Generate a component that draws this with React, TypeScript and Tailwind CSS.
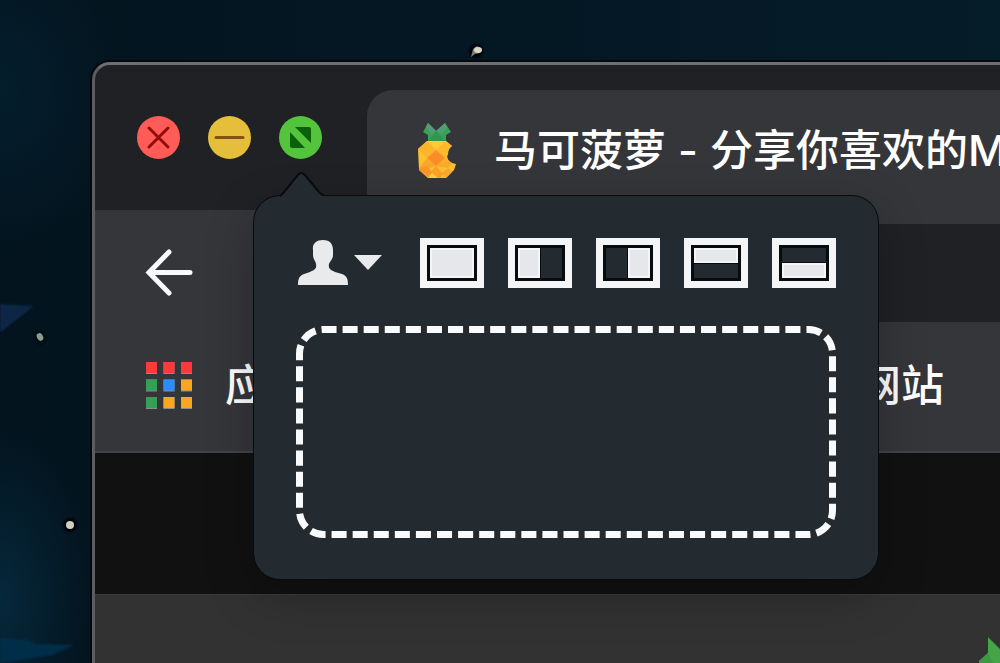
import React, { useState } from "react";

const layouts = [
  { name: "Full screen", x: 10, y: 10, w: 44, h: 30 },
  { name: "Left half", x: 10, y: 10, w: 22, h: 30 },
  { name: "Right half", x: 32, y: 10, w: 22, h: 30 },
  { name: "Top half", x: 10, y: 10, w: 44, h: 15 },
  { name: "Bottom half", x: 10, y: 25, w: 44, h: 15 },
];

const appColors = [
  "#fb3b3b",
  "#fb3b3b",
  "#fb3b3b",
  "#34a056",
  "#2c8cfb",
  "#fba61f",
  "#34a056",
  "#fba61f",
  "#fba61f",
];

const Wallpaper = () => (
  <svg className="absolute inset-0 h-full w-full" aria-hidden="true">
    <defs>
      <filter id="soft" x="-30%" y="-30%" width="160%" height="160%">
        <feGaussianBlur stdDeviation="1" />
      </filter>
      <radialGradient id="glow">
        <stop offset="0" stopColor="#06283c" />
        <stop offset="1" stopColor="#06283c" stopOpacity="0" />
      </radialGradient>
    </defs>
    <ellipse cx="0" cy="600" rx="90" ry="170" fill="url(#glow)" />
    <ellipse cx="0" cy="90" rx="120" ry="160" fill="url(#glow)" opacity="0.5" />
    <g filter="url(#soft)">
      <path d="M0 304 L34 306 L0 333Z" fill="#082545" />
      <path d="M0 638 L28 640 L36 644 L74 645 L52 655 L0 663Z" fill="#062d4a" />
      <circle cx="476" cy="51" r="7" fill="#01060a" />
      <circle cx="40" cy="338" r="6" fill="#020a0e" />
      <circle cx="70" cy="525" r="7" fill="#010508" />
    </g>
    <path d="M471 57 L473 49 L477 46 L482 49 L480 53 L475 54Z" fill="#7b7b6f" />
    <ellipse cx="478" cy="50" rx="4" ry="3" fill="#d8d8c4" />
    <ellipse cx="40" cy="337" rx="3" ry="4" fill="#8b9d8e" transform="rotate(-30 40 337)" />
    <ellipse cx="70" cy="525" rx="4" ry="4" fill="#cfcfbb" />
  </svg>
);

const Pineapple = () => (
  <svg className="h-[56px] w-[38px] shrink-0" viewBox="0 0 38 56" aria-hidden="true">
    <path d="M10 1 L18 9 L27 1 L33 10 L28 13 V19 H10 V13 L5 10Z" fill="#35a456" />
    <path d="M10 1 L18 9 L13 12 L8 5Z" fill="#559b78" />
    <path d="M27 1 L18 9 L24 12 L29 5Z" fill="#559b78" />
    <path d="M18 9 L28 19 H10Z" fill="#2f9850" />
    <path
      d="M9 19 H28 L34 24 C28 28 27 38 34 41 L38 42 L36 48 L28 56 H10 L1 48 L0 27Z"
      fill="#fdc02f"
    />
    <path d="M9 19 H28 L18 28Z" fill="#fecb38" />
    <path d="M9 19 L18 28 L9 36 L0 27Z" fill="#fcb42b" />
    <path d="M28 19 L34 24 C31 26 30 29 30 33 L26 36 L18 28Z" fill="#fdb82c" />
    <path d="M18 28 L27 36 L18 44 L9 36Z" fill="#fb8d29" />
    <path d="M9 36 L18 44 L9 47 L1 46Z" fill="#fca62a" />
    <path d="M27 36 L34 41 L30 46 L18 44Z" fill="#fcab2b" />
    <path d="M1 46 L9 44 L14 50 L10 56 L1 48Z" fill="#fb9829" />
    <path d="M18 44 L25 52 L22 56 H14 L11 52Z" fill="#fca02a" />
    <path d="M30 46 L34 50 L28 56 L24 51Z" fill="#fca82b" />
    <path d="M10 56 L14 51 L20 56Z" fill="#fed13e" />
  </svg>
);

const TrafficLights = () => (
  <div className="flex shrink-0 gap-[28px]">
    <button aria-label="Close" className="h-[43px] w-[43px] rounded-full bg-[#ff5b57]">
      <svg viewBox="0 0 43 43">
        <path d="M12 12 L31 31 M31 12 L12 31" stroke="#920c0c" strokeWidth="3" strokeLinecap="round" />
      </svg>
    </button>
    <button aria-label="Minimize" className="h-[43px] w-[43px] rounded-full bg-[#e5bf3c]">
      <svg viewBox="0 0 43 43">
        <path d="M8 21.5 H35" stroke="#865012" strokeWidth="3" strokeLinecap="round" />
      </svg>
    </button>
    <button aria-label="Zoom" className="h-[43px] w-[43px] rounded-full bg-[#54c43c]">
      <svg viewBox="0 0 43 43" fill="#0b600c">
        <path d="M16 11 H30 Q32 11 32 13 V27Z" />
        <path d="M11 16 L26 32 H13 Q11 32 11 30Z" />
      </svg>
    </button>
  </div>
);

const LayoutPopover = () => {
  const [active, setActive] = useState("");

  return (
    <div
      role="dialog"
      aria-label="Window layouts"
      className="absolute left-[159px] top-[131px] flex flex-col gap-[38px] rounded-[26px] bg-[#232a30] px-[42px] pb-[41px] pt-[42px] shadow-[0_0_0_1px_#070b0e,0_16px_48px_rgba(0,0,0,0.25)]"
    >
      <svg className="absolute -top-[25px] left-[26px] h-[28px] w-[44px]" viewBox="0 0 44 28" aria-hidden="true">
        <path
          d="M0 28 L2 24 L17 5 Q21 -1 26 5 L40 22 L44 26 V28Z"
          fill="#232a30"
        />
        <path
          d="M0 25 Q2 24 4 21 L18 4 Q21 0 25 4 L39 21 Q41 24 44 24"
          fill="none"
          stroke="#070b0e"
          strokeWidth="2"
        />
      </svg>
      <div className="flex items-center justify-between">
        <button aria-label="Profile" className="flex items-center">
          <svg className="h-[50px] w-[88px]" viewBox="0 0 88 50" fill="#e8eaec">
            <path d="M27 2 C20 2 16 6 17 12 V17 C17 21 20 24 20 26 C21 31 18 32 14 34 L8 36 C3 38 2 41 2 47 H52 C52 41 51 38 46 36 L39 34 C35 32 32 31 33 26 C34 23 37 21 37 17 V12 C37 6 34 2 27 2Z" />
            <path d="M58 17 H86 L72 32Z" />
          </svg>
        </button>
        <div className="flex gap-[24px]">
          {layouts.map((item) => (
            <button
              key={item.name}
              aria-label={item.name}
              aria-pressed={active === item.name}
              onClick={() => setActive(item.name)}
              className="h-[50px] w-[64px]"
            >
              <svg viewBox="0 0 64 50">
                <rect x="3.5" y="3.5" width="57" height="43" fill="#232a30" stroke="#f3f5f6" strokeWidth="7" />
                <rect x="8.5" y="8.5" width="47" height="33" fill="none" stroke="#080c10" strokeWidth="3" />
                <rect x={item.x - 1} y={item.y - 1} width={item.w + 2} height={item.h + 2} fill="#080c10" />
                <rect x={item.x} y={item.y} width={item.w} height={item.h} fill="#f3f5f6" />
                <rect x={item.x + 2} y={item.y + 2} width={item.w - 4} height={item.h - 4} fill="#e6e7ea" />
              </svg>
            </button>
          ))}
        </div>
      </div>
      <svg className="h-[212px] w-[540px]" viewBox="0 0 540 212" aria-hidden="true">
        <rect
          x="3.5"
          y="3.5"
          width="533"
          height="205"
          rx="24"
          fill="none"
          stroke="#f8fafb"
          strokeWidth="7"
          pathLength="1428"
          strokeDasharray="15 6"
          strokeDashoffset="2"
        />
      </svg>
    </div>
  );
};

const App = () => {
  return (
    <div className="relative flex min-h-screen overflow-hidden bg-linear-to-r from-[#03141e] to-[#051c29] pl-[92px] pt-[62px] font-['Inter','Noto_Sans_CJK_SC',sans-serif] text-[43px] font-medium text-white">
      <Wallpaper />
      <div className="relative flex min-w-0 flex-1 flex-col rounded-tl-[18px] border-l-[3px] border-t-[3px] border-l-[#5c5d60] border-t-[#6e7074] bg-[#202124] shadow-[0_0_0_2px_#02080c]">
        <div className="flex h-[145px] items-center overflow-hidden pl-[42px]">
          <TrafficLights />
          <div className="ml-[45px] flex h-[120px] min-w-0 flex-1 items-center gap-[38px] self-end overflow-hidden rounded-tl-[26px] bg-[#35363a] pl-[51px]">
            <Pineapple />
            <h1 className="flex gap-3 whitespace-nowrap">
              <span>马可菠萝</span>
              <span>-</span>
              <span>分享你喜欢的M</span>
            </h1>
          </div>
        </div>

        <div className="flex h-[112px] items-center bg-[#35363a] pl-[50px] pt-[14px]">
          <button aria-label="Back" className="h-[48px] w-[48px] shrink-0">
            <svg viewBox="0 0 48 48" fill="none" stroke="#f8f9fa" strokeWidth="5" strokeLinecap="round">
              <path d="M24 3 L4 23.5 L24 44 M4 23.5 H45" />
            </svg>
          </button>
          <input
            aria-label="Address"
            className="ml-[400px] h-[98px] min-w-0 flex-1 rounded-l-full bg-[#202124] px-[48px] outline-none"
          />
        </div>

        <div className="flex h-[131px] items-center overflow-hidden whitespace-nowrap border-b-2 border-[#434448] bg-[#35363a] pb-[2px] pl-[50px]">
          <button className="flex items-center gap-[32px]">
            <svg className="h-[48px] w-[48px]" viewBox="0 0 48 48" aria-hidden="true">
              {appColors.map((color, i) => (
                <g key={i}>
                  <rect x={1 + (i % 3) * 17.5} y={Math.floor(i / 3) * 17.5} width="11" height="12" fill="#8a8c8f" />
                  <rect x={1 + (i % 3) * 17.5} y={Math.floor(i / 3) * 17.5} width="11" height="11" fill={color} />
                </g>
              ))}
            </svg>
            <span>应用</span>
          </button>
          <button className="ml-[547px]">网站</button>
        </div>

        <div className="h-[141px] bg-[#111111]" />

        <div className="flex flex-1 justify-end overflow-hidden border-t border-[#3c3c3c] bg-[#323232] pt-[42px]">
          <svg className="h-[26px] w-[21px]" viewBox="0 0 21 26" aria-hidden="true">
            <path d="M9 0 L21 12 V26 H0 L0 24 L9 16Z" fill="#45a348" />
            <path d="M0 24 L9 16 L14 26 H0Z" fill="#3c9940" />
          </svg>
        </div>

        <LayoutPopover />
      </div>
    </div>
  );
};

export default App;
